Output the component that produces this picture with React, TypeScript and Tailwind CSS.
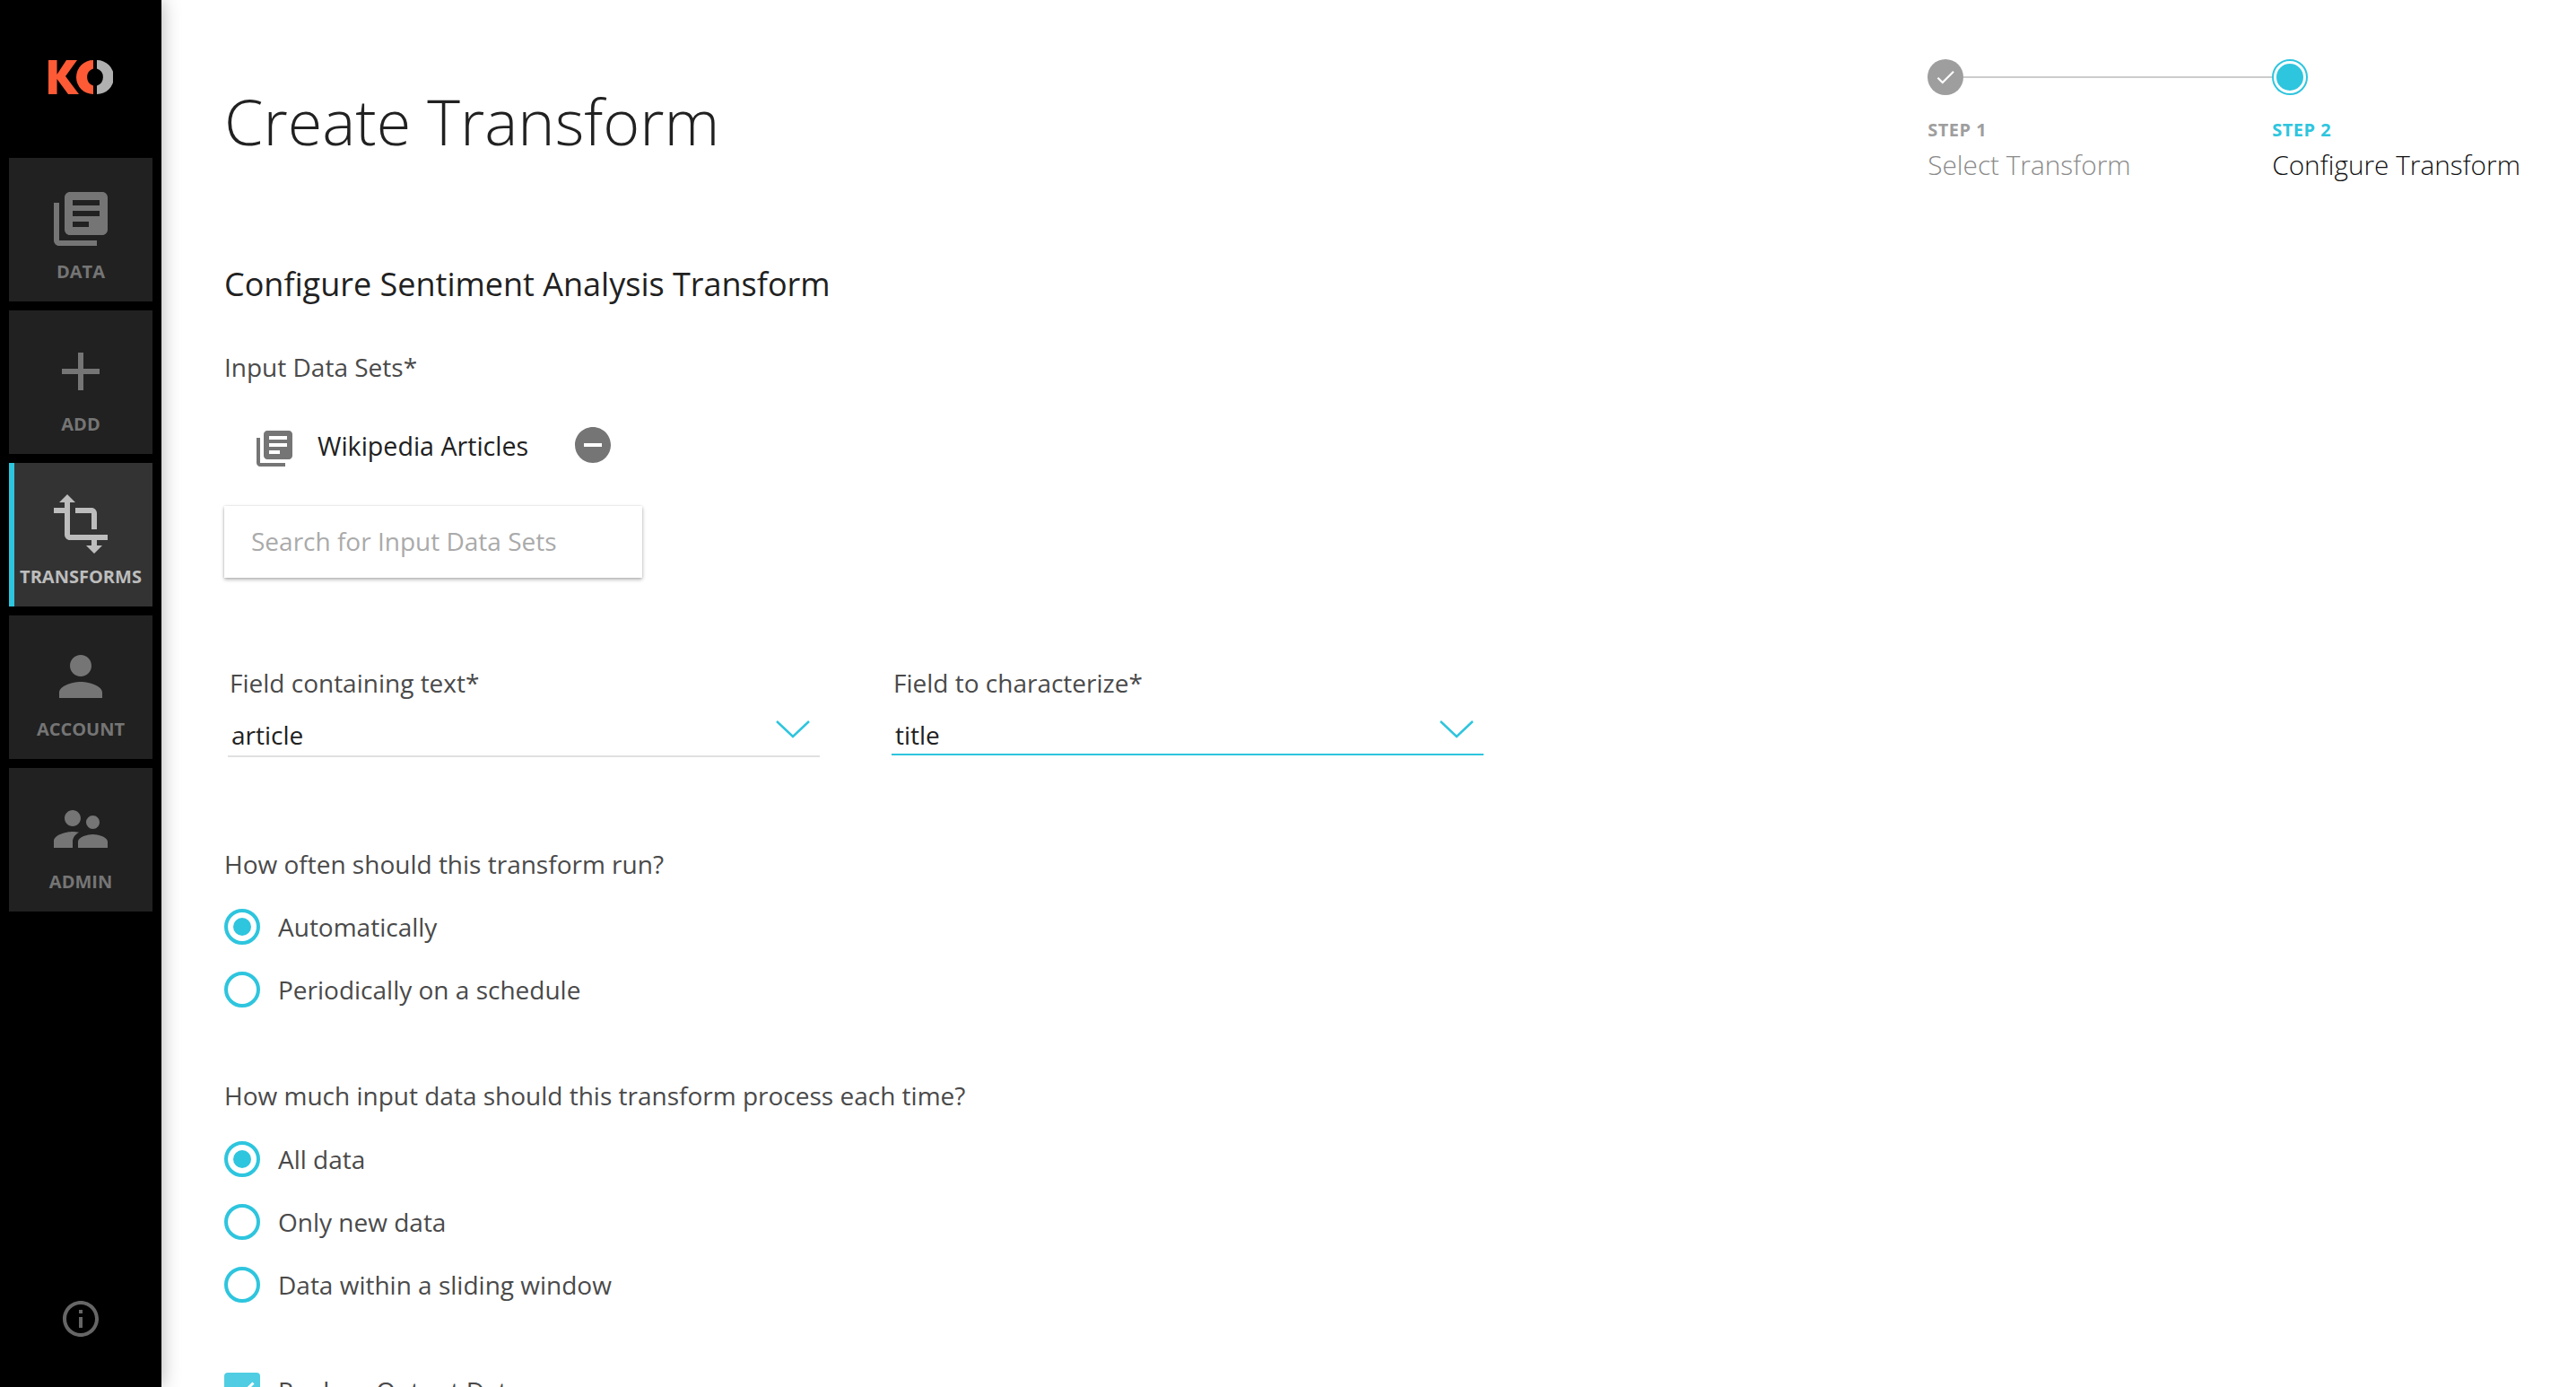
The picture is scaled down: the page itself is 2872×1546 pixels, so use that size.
import React from 'react';
import {
  MdAdd,
  MdCheck,
  MdInfoOutline,
  MdLibraryBooks,
  MdPerson,
  MdRemoveCircle,
  MdSupervisorAccount,
  MdTransform,
} from 'react-icons/md';

const NAV_ITEMS = [
  { label: 'DATA', Icon: MdLibraryBooks },
  { label: 'ADD', Icon: MdAdd },
  { label: 'TRANSFORMS', Icon: MdTransform, active: true },
  { label: 'ACCOUNT', Icon: MdPerson },
  { label: 'ADMIN', Icon: MdSupervisorAccount },
];

const Logo = () => (
  <svg width="72" height="38" viewBox="0 0 72 38" className="block">
    <path d="M0 0h9.500v16L20 0h12L19 18l15 20H22L9.500 21v17H0z" fill="#ff5a36" />
    <path d="M50 0A19 19 0 0 0 50 38V28.500A10 10 0 0 1 50 9.500z" fill="#ff5a36" />
    <path d="M54 0A19 19 0 0 1 54 38V28.500A10 10 0 0 0 54 9.500z" fill="#b0b0b0" />
  </svg>
);

const Sidebar = () => (
  <aside className="relative z-10 flex h-full w-[180px] shrink-0 flex-col items-center bg-black shadow-[0_0_20px_rgba(0,0,0,0.3)]">
    <div className="pt-[67px]">
      <Logo />
    </div>
    <nav className="mt-[71px] flex w-[160px] flex-col gap-[10px]">
      {NAV_ITEMS.map(({ label, Icon, active }) => (
        <div
          key={label}
          className={
            active
              ? 'flex h-[160px] flex-col items-center border-l-[6px] border-[#2ec5de] bg-[#333333] pt-[32px] text-[#bdbdbd]'
              : 'flex h-[160px] flex-col items-center bg-[#212121] pt-[32px] text-[#757575]'
          }
        >
          <Icon size={72} className={active ? '-ml-[6px] shrink-0' : 'shrink-0'} />
          <span className={active ? '-ml-[6px] mt-[9px] text-[20px] leading-[28px] font-bold' : 'mt-[9px] text-[20px] leading-[28px] font-bold'}>
            {label}
          </span>
        </div>
      ))}
    </nav>
    <div className="mt-auto pb-[52px] text-[#666666]">
      <MdInfoOutline size={48} />
    </div>
  </aside>
);

const Stepper = () => (
  <div className="flex">
    <div className="w-[384px]">
      <div className="flex items-center">
        <div className="flex h-[40px] w-[40px] items-center justify-center rounded-full bg-[#9e9e9e] text-white">
          <MdCheck size={26} />
        </div>
        <div className="h-[2px] flex-1 bg-[#cccccc]" />
      </div>
      <div className="mt-[25px] text-[20px] leading-[28px] font-bold tracking-[0.5px] text-[#9e9e9e]">STEP 1</div>
      <div className="mt-[6px] text-[29.8px] leading-[38px] font-light text-[#8a8a8a]">Select Transform</div>
    </div>
    <div>
      <div className="flex h-[40px] w-[40px] items-center justify-center rounded-full border-2 border-[#2ec5de] bg-white">
        <div className="h-[30px] w-[30px] rounded-full bg-[#2ec5de]" />
      </div>
      <div className="mt-[25px] text-[20px] leading-[28px] font-bold tracking-[0.5px] text-[#2ec5de]">STEP 2</div>
      <div className="mt-[6px] text-[29.8px] leading-[38px] font-light text-[#111111]">Configure Transform</div>
    </div>
  </div>
);

const Chevron = () => (
  <svg width="38" height="20" viewBox="0 0 38 20" fill="none" className="mt-[3px] shrink-0">
    <path d="M1 1l18 17L37 1" stroke="#2ec5de" strokeWidth="2.500" />
  </svg>
);

const SelectField = ({ label, value, focused }: { label: string; value: string; focused?: boolean }) => (
  <div className="w-[660px]">
    <div className="pb-[2px] pl-[2px] text-[28px] leading-[38px] text-[#4a4a4a]">{label}</div>
    <div className={focused ? 'mt-[18px] border-b-2 border-[#2ec5de]' : 'mt-[18px] border-b-2 border-[#e0e0e0] pb-[2px]'}>
      <div className="flex items-start justify-between pr-[11px] pl-[4px]">
        <span className="pb-[2px] text-[28px] leading-[38px] text-[#212121]">{value}</span>
        <Chevron />
      </div>
    </div>
  </div>
);

const Radio = ({ label, checked }: { label: string; checked?: boolean }) => (
  <div className="flex h-[40px] items-center gap-[20px]">
    <div className="flex h-[40px] w-[40px] items-center justify-center rounded-full border-4 border-[#2ec5de]">
      {checked && <div className="h-[20px] w-[20px] rounded-full bg-[#2ec5de]" />}
    </div>
    <span className="text-[28px] leading-[40px] text-[#4a4a4a]">{label}</span>
  </div>
);

const App: React.FC = () => {
  return (
    <div className="flex h-screen w-full overflow-hidden bg-white font-['Open_Sans',sans-serif]">
      <Sidebar />
      <main className="flex-1 pr-[62px] pl-[70px]">
        <header className="flex items-start justify-between pt-[66px]">
          <h1 className="mt-[29px] text-[70px] leading-[80px] font-light text-[#212121]">Create Transform</h1>
          <Stepper />
        </header>

        <h2 className="mt-[90px] text-[36px] leading-[48px] font-normal text-[#212121]">
          Configure Sentiment Analysis Transform
        </h2>

        <div className="mt-[49px] pb-[2px] text-[28px] leading-[38px] text-[#4a4a4a]">Input Data Sets*</div>
        <div className="mt-[42px] flex h-[52px] items-start pl-[32px]">
          <MdLibraryBooks size={48} className="mt-[4px] text-[#757575]" />
          <span className="ml-[24px] text-[28.6px] leading-[50px] text-[#212121]">Wikipedia Articles</span>
          <MdRemoveCircle size={48} className="ml-[48px] text-[#757575]" />
        </div>
        <div className="mt-[40px] flex h-[80px] w-[466px] items-center bg-white pb-[2px] pl-[30px] text-[28px] text-[#aaaaaa] shadow-[0_2px_4px_rgba(0,0,0,0.3),0_0_2px_rgba(0,0,0,0.12)]">
          Search for Input Data Sets
        </div>

        <div className="mt-[98px] ml-[4px] flex gap-[80px]">
          <SelectField label="Field containing text*" value="article" />
          <SelectField label="Field to characterize*" value="title" focused />
        </div>

        <div className="mt-[100px] pb-[2px] text-[28px] leading-[38px] text-[#4a4a4a]">How often should this transform run?</div>
        <div className="mt-[29px] flex flex-col gap-[30px]">
          <Radio label="Automatically" checked />
          <Radio label="Periodically on a schedule" />
        </div>

        <div className="mt-[79px] pb-[2px] text-[28px] leading-[38px] text-[#4a4a4a]">
          How much input data should this transform process each time?
        </div>
        <div className="mt-[30px] flex flex-col gap-[30px]">
          <Radio label="All data" checked />
          <Radio label="Only new data" />
          <Radio label="Data within a sliding window" />
        </div>

        <div className="mt-[78px] flex h-[40px] items-center gap-[20px]">
          <div className="flex h-[40px] w-[40px] items-center justify-center rounded-[4px] bg-[#50cde2] text-white">
            <MdCheck size={36} />
          </div>
          <span className="text-[28px] leading-[40px] text-[#4a4a4a]">Replace Output Data</span>
        </div>
      </main>
    </div>
  );
};

export default App;
